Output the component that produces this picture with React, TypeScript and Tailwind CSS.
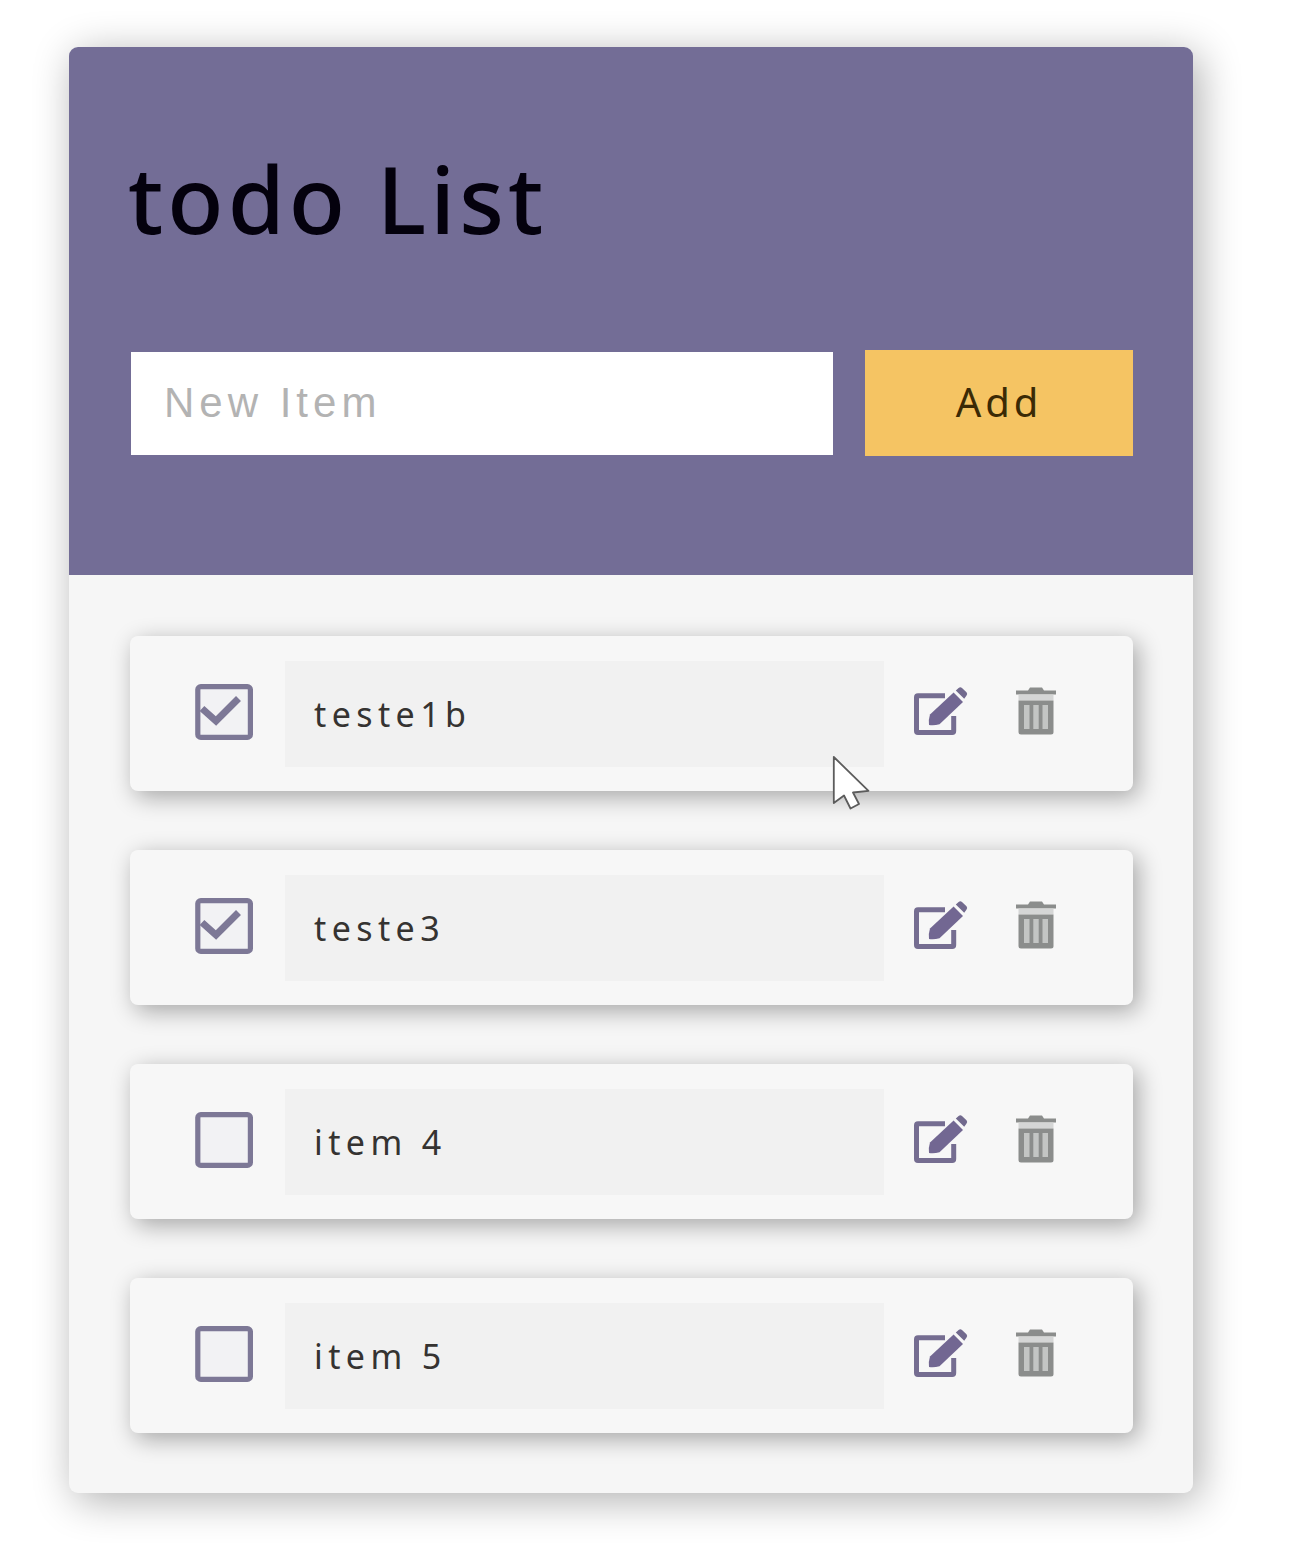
import React, { useState } from "react";

type Item = { id: number; text: string; done: boolean };

const initialItems: Item[] = [
  { id: 1, text: "teste1b", done: true },
  { id: 2, text: "teste3", done: true },
  { id: 3, text: "item 4", done: false },
  { id: 4, text: "item 5", done: false },
];

function CheckboxIcon({ checked }: { checked: boolean }) {
  return (
    <svg width="60" height="58" viewBox="0 0 60 58" fill="none" stroke="#7d7896">
      <rect x="3.8" y="3.6" width="52.6" height="50.8" rx="3" strokeWidth="5.2" fill="#f2f2f4" />
      {checked && <path d="M8 25.5 L22 38 L44.5 15.5" strokeWidth="7" />}
    </svg>
  );
}

function EditIcon() {
  return (
    <svg width="60" height="58" viewBox="0 0 60 58" fill="none">
      <path
        d="M36 12.7 H9 Q7.5 12.7 7.5 14.2 V48 Q7.5 49.5 9 49.5 H43.2 Q44.7 49.5 44.7 48 V33"
        stroke="#756d91"
        strokeWidth="5"
      />
      <path d="M44.6 9.5 L54 18.9 L30.5 41.3 Q25 42.8 20 42 Q19.2 37 21 31.5 Z" fill="#726792" />
      <path d="M46.8 7.4 L49.6 5.1 Q51.4 3.6 53 5.1 L57.5 9.3 Q59 11 57.4 12.8 L55.2 15.8 Z" fill="#726a8e" />
    </svg>
  );
}

function TrashIcon() {
  return (
    <svg width="46" height="58" viewBox="0 0 46 58" fill="none">
      <path d="M15 7.5 L17 4.5 H29 L31 7.5 H43 V11.5 H3 V7.5 Z" fill="#8b8d8c" />
      <rect x="5.5" y="11.5" width="35" height="6" fill="#d5d6d6" />
      <path d="M5.5 17.5 H40.5 V49 Q40.5 51.5 38 51.5 H8 Q5.5 51.5 5.5 49 Z" fill="#8b8d8c" />
      <path d="M11 22 H16.5 V46 H11 Z M20.3 22 H25.7 V46 H20.3 Z M29.5 22 H35 V46 H29.5 Z" fill="#c3c5c4" />
    </svg>
  );
}

function Pointer() {
  return (
    <svg className="pointer-events-none absolute left-[701px] top-[118px]" width="42" height="58" viewBox="0 0 42 58">
      <path
        d="M2.8 3 V49 L13 41.5 L19.5 54.5 L28 50 L22 38.5 L37.5 36.8 Z"
        fill="#fff"
        stroke="#5c5c5c"
        strokeWidth="1.8"
        strokeLinejoin="round"
      />
    </svg>
  );
}

export default function App() {
  const [items, setItems] = useState(initialItems);
  const toggle = (id: number) =>
    setItems(items.map((item) => (item.id === id ? { ...item, done: !item.done } : item)));

  return (
    <div className="h-[1566px] w-[1311px] overflow-hidden bg-white pt-[47px] pl-[69px]">
      <main className="flex h-[1446px] w-[1124px] flex-col rounded-[9px] bg-[#f6f6f6] shadow-[6px_7px_42px_rgba(0,0,0,0.32)]">
        <header className="h-[528px] rounded-t-[9px] bg-[#736d96] pt-[88px] pr-[60px] pl-[62px]">
          <h1 className="-ml-[3px] h-[128px] font-['Noto_Sans'] text-[92px] leading-[128px] font-medium tracking-[4.1px] whitespace-pre text-[#04010d]">
            todo List
          </h1>
          <form className="mt-[87px] flex items-center" onSubmit={(e) => e.preventDefault()}>
            <input
              placeholder="New Item"
              className="h-[103px] w-[702px] bg-white pl-[33px] font-['Liberation_Sans'] text-[42px] tracking-[5px] text-[#333] outline-none placeholder:text-[#b3b3b3]"
            />
            <button className="ml-[32px] h-[106px] w-[268px] bg-[#f5c463] pb-[2px] font-['Noto_Sans'] text-[40px] tracking-[3.9px] text-[#3b2a05]">
              Add
            </button>
          </form>
        </header>
        <ul className="flex flex-col gap-[59px] px-[61px] pt-[61px]">
          {items.map((item, index) => (
            <li
              key={item.id}
              className="relative flex h-[155px] w-[1003px] items-center rounded-[8px] bg-[#f7f7f7] pl-[64px] shadow-[5px_6px_23px_rgba(0,0,0,0.33)]"
            >
              <button className="-mt-[4px]" onClick={() => toggle(item.id)} aria-label="Toggle item">
                <CheckboxIcon checked={item.done} />
              </button>
              <div className="ml-[31px] flex h-[106px] w-[599px] items-center bg-[#f1f1f1] pt-[1px] pl-[29px] font-['Noto_Sans'] text-[34px] tracking-[5.4px] text-[#353331]">
                {item.text}
              </div>
              <button className="-mt-[4px] ml-[25px]" aria-label="Edit item">
                <EditIcon />
              </button>
              <button className="-mt-[4px] ml-[44px]" aria-label="Delete item">
                <TrashIcon />
              </button>
              {index === 0 && <Pointer />}
            </li>
          ))}
        </ul>
      </main>
    </div>
  );
}
